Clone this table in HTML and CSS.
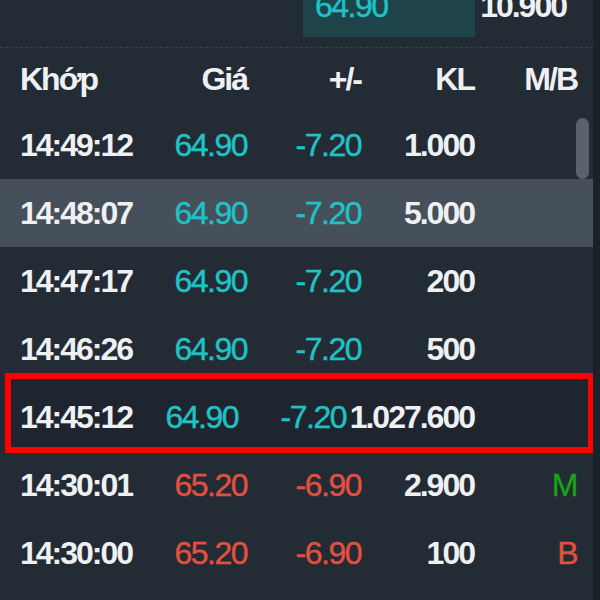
FILE: index.html
```html
<!DOCTYPE html>
<html lang="vi">
<head>
    <meta charset="UTF-8">
    <meta name="viewport" content="width=device-width, initial-scale=1.0">
    <title>Khớp lệnh</title>
    <link rel="stylesheet" href="styles.css">
</head>
<body>
    <div class="screen">
        <div class="panel">
            <!-- dòng sổ lệnh phía trên -->
            <div class="book-row">
                <div class="book-price">64.90</div>
                <div class="book-vol">10.900</div>
            </div>

            <!-- tiêu đề -->
            <div class="trade-row trade-head">
                <div class="c-time">Khớp</div>
                <div class="c-num">Giá</div>
                <div class="c-num">+/-</div>
                <div class="c-num">KL</div>
                <div class="c-num">M/B</div>
            </div>

            <div class="trade-list">
                <div class="scroll-thumb"></div>

                <div class="trade-row">
                    <div class="c-time">14:49:12</div>
                    <div class="c-num up">64.90</div>
                    <div class="c-num up">-7.20</div>
                    <div class="c-num">1.000</div>
                    <div class="c-num"></div>
                </div>
                <div class="trade-row active">
                    <div class="c-time">14:48:07</div>
                    <div class="c-num up">64.90</div>
                    <div class="c-num up">-7.20</div>
                    <div class="c-num">5.000</div>
                    <div class="c-num"></div>
                </div>
                <div class="trade-row">
                    <div class="c-time">14:47:17</div>
                    <div class="c-num up">64.90</div>
                    <div class="c-num up">-7.20</div>
                    <div class="c-num">200</div>
                    <div class="c-num"></div>
                </div>
                <div class="trade-row">
                    <div class="c-time">14:46:26</div>
                    <div class="c-num up">64.90</div>
                    <div class="c-num up">-7.20</div>
                    <div class="c-num">500</div>
                    <div class="c-num"></div>
                </div>
                <div class="trade-row marked">
                    <div class="mark-box"></div>
                    <div class="c-time">14:45:12</div>
                    <div class="c-num up">64.90</div>
                    <div class="c-num up">-7.20</div>
                    <div class="c-num">1.027.600</div>
                    <div class="c-num"></div>
                </div>
                <div class="trade-row">
                    <div class="c-time">14:30:01</div>
                    <div class="c-num down">65.20</div>
                    <div class="c-num down">-6.90</div>
                    <div class="c-num">2.900</div>
                    <div class="c-num buy">M</div>
                </div>
                <div class="trade-row">
                    <div class="c-time">14:30:00</div>
                    <div class="c-num down">65.20</div>
                    <div class="c-num down">-6.90</div>
                    <div class="c-num">100</div>
                    <div class="c-num down">B</div>
                </div>
            </div>
        </div>
        <div class="edge"></div>
    </div>
</body>
</html>
```

FILE: styles.css
```css
/* Reset */
* {
    margin: 0;
    padding: 0;
    box-sizing: border-box;
}

body {
    background-color: #232b35;
    font-family: 'Liberation Sans', Arial, sans-serif;
    color: #eef0f2;
    overflow: hidden;
}

.screen {
    display: flex;
    height: 600px;
}

.panel {
    width: 593px;
    height: 600px;
    overflow: hidden;
}

.edge {
    width: 7px;
    background-color: #1b2129;
}

/* sổ lệnh (bị cắt ở mép trên) */
.book-row {
    display: flex;
    height: 37px;
    overflow: hidden;
    font-size: 32px;
    letter-spacing: -1.5px;
    line-height: 32px;
}

.book-price {
    margin-left: 303px;
    margin-top: -10px;
    width: 172px;
    height: 47px;
    padding-left: 12px;
    background-color: #1e444a;
    color: #1fc3c6;
    -webkit-text-stroke: 0.4px #1fc3c6;
}

.book-vol {
    margin-top: -10px;
    width: 91px;
    text-align: right;
    font-weight: bold;
    letter-spacing: -2px;
}

/* bảng khớp lệnh */
.trade-head {
    border-top: 1px dashed #38424d;
    margin-top: 10px;
    height: 64px !important;
}

.trade-row {
    position: relative;
    display: grid;
    grid-template-columns: 130px 97px 114px 113px 103px;
    align-items: center;
    height: 68px;
    padding-left: 20px;
    font-size: 32px;
    letter-spacing: -2px;
    font-weight: bold;
}

.trade-list {
    position: relative;
}

.c-num {
    text-align: right;
}

.up,
.down,
.buy {
    font-weight: normal;
    letter-spacing: -1.5px;
    -webkit-text-stroke: 0.4px currentColor;
}

.up {
    color: #1fc3c6;
}

.down {
    color: #e2513f;
}

.buy {
    color: #18a318;
}

.trade-row.active {
    background-color: #46505b;
}

/* dòng được đánh dấu, các cột bị đẩy lệch */
.trade-row.marked {
    grid-template-columns: 130px 88px 108px 128px 103px;
}

.mark-box {
    position: absolute;
    top: -10px;
    bottom: -2px;
    left: 5px;
    right: -1px;
    border: 6px solid #ff0000;
    background-color: #1e252e;
    z-index: 0;
}

.trade-row.marked > div:not(.mark-box) {
    position: relative;
    z-index: 1;
}

.scroll-thumb {
    position: absolute;
    top: 7px;
    left: 576px;
    width: 13px;
    height: 61px;
    border-radius: 7px;
    background-color: #5a636d;
    z-index: 2;
}
```
